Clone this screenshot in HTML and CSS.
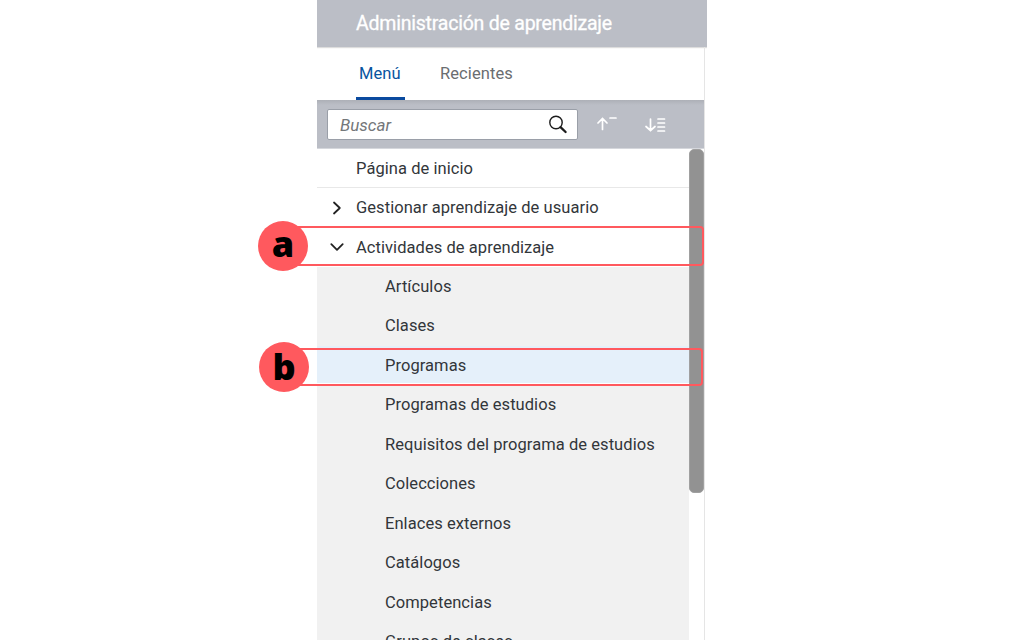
FILE: index.html
```html
<!DOCTYPE html>
<html lang="es">
<head>
<meta charset="utf-8">
<title>Administración de aprendizaje</title>
<link rel="stylesheet" href="styles.css">
</head>
<body>
<main class="panel">
  <header class="title">Administración de aprendizaje</header>
  <div class="body">
    <nav class="tabs">
      <a class="tab active">Menú</a>
      <a class="tab recent">Recientes</a>
    </nav>
    <div class="toolbar">
      <div class="search">
        <span class="placeholder">Buscar</span>
        <svg class="lens" width="20" height="20" viewBox="0 0 20 20" fill="none" stroke="#1c1c1c"><circle cx="8" cy="7.5" r="6.2" stroke-width="1.4"/><path d="M12.5 12.2L17.6 17" stroke-width="2.3" stroke-linecap="round"/></svg>
      </div>
      <svg class="collapse" width="20" height="16" viewBox="0 0 20 16" fill="none" stroke="#fff" stroke-width="1.7" stroke-linecap="round"><path d="M5.5 13.5V2.5M1 7l4.500-4.500L10 7M13 2h6"/></svg>
      <svg class="expand" width="21" height="16" viewBox="0 0 21 16" fill="none" stroke="#fff" stroke-width="1.7" stroke-linecap="round"><path d="M5.500 2v11.500M1 9.500l4.500 4 4.500-4M13 2h6.500M13 6h6.500M13 10h6.500M13 14h6.500"/></svg>
    </div>
    <div class="content">
      <ul class="tree">
        <li class="row line"><span>Página de inicio</span></li>
        <li class="row"><svg class="chevron" width="14" height="14" viewBox="0 0 14 14"><path d="M4 1.500L9.800 7 4 12.500"/></svg><span class="user">Gestionar aprendizaje de usuario</span></li>
        <li class="row"><svg class="chevron" width="14" height="14" viewBox="0 0 14 14"><path d="M1.300 4.200L7 9.800l5.700-5.600"/></svg><span>Actividades de aprendizaje</span></li>
        <li class="row child"><span>Artículos</span></li>
        <li class="row child"><span>Clases</span></li>
        <li class="row child selected"><span>Programas</span></li>
        <li class="row child"><span>Programas de estudios</span></li>
        <li class="row child"><span>Requisitos del programa de estudios</span></li>
        <li class="row child"><span>Colecciones</span></li>
        <li class="row child"><span>Enlaces externos</span></li>
        <li class="row child"><span>Catálogos</span></li>
        <li class="row child"><span>Competencias</span></li>
        <li class="row child"><span>Grupos de clases</span></li>
      </ul>
      <div class="track"><div class="thumb"></div></div>
    </div>
  </div>
</main>
<div class="outline outline-a"></div>
<div class="outline outline-b"></div>
<div class="badge badge-a">a</div>
<div class="badge badge-b">b</div>
</body>
</html>
```
FILE: styles.css
```css
* { box-sizing: border-box; }
body { margin: 0; height: 640px; overflow: hidden; position: relative; background: #fff; font-family: Roboto, "Liberation Sans", sans-serif; color: #32363a; }
.panel { width: 390px; height: 640px; margin-left: 317px; display: flex; flex-direction: column; overflow: hidden; }
.title { height: 47px; flex: none; padding-left: 39px; background: #bbbec6; color: #fff; font-size: 19.5px; letter-spacing: -.22px; line-height: 47px; white-space: nowrap; -webkit-text-stroke: .3px #fff; box-shadow: 0 1px 1px #ddd; }
.body { flex: 1; min-height: 0; width: 388px; border-right: 1px solid #e5e5e5; display: flex; flex-direction: column; }
.tabs { height: 53px; flex: none; display: flex; gap: 35px; padding-left: 39px; font-size: 16.5px; line-height: 54px; letter-spacing: .08px; }
.tab { color: #6a6d70; }
.active { width: 49px; padding-left: 3px; color: #0854a0; border-bottom: 3px solid #0a4a9f; border-radius: 2px 2px 0 0; }
.toolbar { height: 49px; flex: none; display: flex; padding: 9px 0 0 10px; background: linear-gradient(#adb0b7, #bbbec6 5px); border-bottom: 1px solid #d5d7dc; }
.search { width: 251px; height: 31px; display: flex; justify-content: space-between; padding: 5px 9px 0 12px; background: #fff; border: 1px solid #9a9fa8; border-radius: 2px; }
.placeholder { font-size: 17px; line-height: 20px; font-style: italic; color: #74777a; }
.collapse { margin: 7px 0 0 19px; }
.expand { margin: 8px 0 0 28px; }
.content { flex: 1; min-height: 0; display: flex; }
.tree { width: 372px; margin: 0; padding: 0; list-style: none; }
.row { height: 39.45px; display: flex; align-items: center; padding: 0 0 1px 39px; font-size: 16.5px; letter-spacing: .06px; white-space: nowrap; }
.line { border-bottom: 1px solid #e8e8e8; padding-bottom: 0; }
.child { padding-left: 68px; background: #f1f1f1; }
.selected { background: linear-gradient(#e5f0fa 0 37.500px, #fff 37.500px); }
.chevron { margin: 0 12px 0 -26px; fill: none; stroke: #222; stroke-width: 1.8; stroke-linecap: round; stroke-linejoin: round; }
.track { width: 15px; }
.thumb { height: 344px; background: #929292; border: 1px solid #a0a0a0; border-radius: 5px; }
.outline { position: absolute; border: 2px solid #ff595e; border-radius: 4px; }
.outline-a { left: 280px; top: 226px; width: 424px; height: 40px; }
.outline-b { left: 280px; top: 348px; width: 423px; height: 38px; }
.badge { position: absolute; width: 50px; height: 50px; border-radius: 50%; background: #ff595e; color: #000; font: 800 36px/48px "Open Sans", sans-serif; text-align: center; }
.badge-a { left: 258px; top: 221px; line-height: 46px; }
.badge-b { left: 259px; top: 342px; line-height: 50px; }
```
